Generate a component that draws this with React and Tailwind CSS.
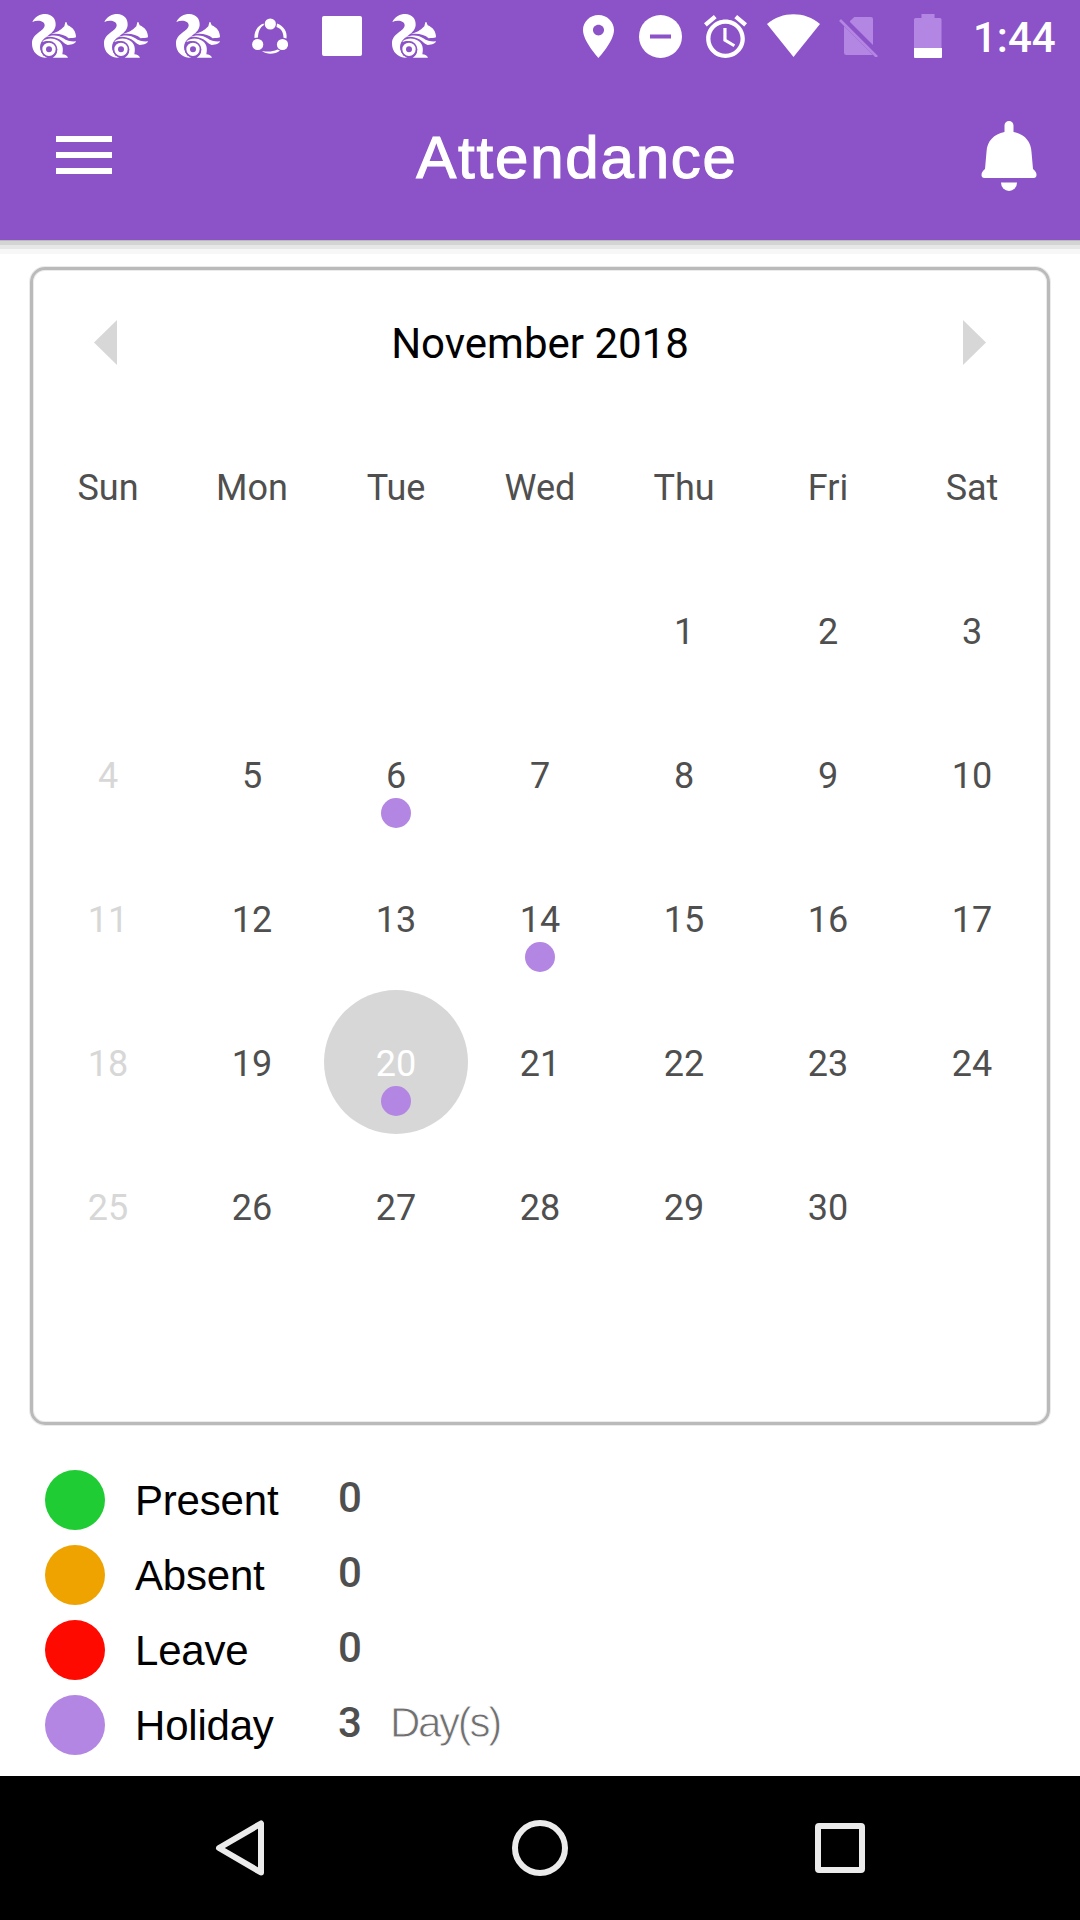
import React from 'react';

const weekdays = ['Sun', 'Mon', 'Tue', 'Wed', 'Thu', 'Fri', 'Sat'];

// November 2018 starts on a Thursday; six rows are always shown
const FIRST_WEEKDAY = 4;
const DAYS_IN_MONTH = 30;
const SELECTED_DAY = 20;
const holidays = [6, 14, 20];

const cells = Array.from({ length: 42 }, (_, i) => {
  const day = i - FIRST_WEEKDAY + 1;
  return day >= 1 && day <= DAYS_IN_MONTH ? day : null;
});

const legend = [
  { label: 'Present', count: 0, color: 'bg-[#20cc33]' },
  { label: 'Absent', count: 0, color: 'bg-[#efa300]' },
  { label: 'Leave', count: 0, color: 'bg-[#ff0a00]' },
  { label: 'Holiday', count: 3, color: 'bg-[#b386e3]', unit: 'Day(s)' },
];

const SquirrelIcon = () => (
  <svg className="h-11 w-11 shrink-0" viewBox="0 0 132 132" fill="white">
    <path d="M1 24C9 8 24 0 40 0C60 1 72 14 71 33C70 50 56 59 44 68C28 78 22 92 25 106C27 118 34 125 46 130C42 132 36 132 30 130C10 123 0 108 0 88C0 58 38 52 38 34C38 21 18 17 1 24Z" />
    <path d="M56 60C72 56 86 50 97 37L100 25L103 24L107 34C122 40 132 52 132 70C125 73 118 72 110 73C98 61 78 57 56 60Z" />
    <path d="M40 70C60 61 82 63 94 73C104 81 120 83 132 82C130 89 122 92 107 93C98 91 94 83 82 76C68 68 54 66 40 70Z" />
    <path d="M32 82C50 66 84 74 91 96C94 106 92 114 91 121C99 121 106 125 108 131H62C74 125 78 112 74 102C69 86 50 76 32 84Z" />
    <circle cx="51" cy="106" r="25" fill="#8c52c7" />
    <circle cx="51" cy="106" r="14.500" fill="none" stroke="white" strokeWidth="11" />
  </svg>
);

const ShareIcon = () => (
  <svg className="h-9 w-9 shrink-0" viewBox="0 0 36 36" fill="white">
    <circle cx="18.300" cy="6" r="5.600" />
    <circle cx="5.700" cy="26.500" r="5.600" />
    <circle cx="30.500" cy="26.500" r="5.600" />
    <path d="M11.500 5.500C5 8 2 14 2.500 20L6 19.500C6 14 8 9 12 7Z" />
    <path d="M25 5.500C32 8 35.500 14 34.500 20.500L31.500 19.800C31.500 14 29 10.500 24.500 9Z" />
    <path d="M10 33C15 37 23 36.500 28 32.500L25.500 31.500C20 34 16 33.800 10 33Z" />
  </svg>
);

const StatusBar = () => (
  <div className="flex h-[72px] items-start">
    <div className="flex w-[436px] shrink-0 items-center gap-7 pt-3.5 pl-8">
      <SquirrelIcon />
      <SquirrelIcon />
      <SquirrelIcon />
      <div className="flex w-11 shrink-0 justify-center">
        <ShareIcon />
      </div>
      <div className="mx-0.5 h-10 w-10 shrink-0 rounded-xs bg-white" />
      <SquirrelIcon />
    </div>
    <div className="ml-[147px] flex shrink-0 items-start pt-3.5">
      <svg className="mt-px h-[43px] w-[31px]" viewBox="5 2 14 20" preserveAspectRatio="none" fill="white">
        <path d="M12 2C8.130 2 5 5.130 5 9c0 5.250 7 13 7 13s7-7.750 7-13c0-3.870-3.130-7-7-7zm0 9.500c-1.380 0-2.500-1.120-2.500-2.500s1.120-2.500 2.500-2.500 2.500 1.120 2.500 2.500-1.120 2.500-2.500 2.500z" />
      </svg>
      <svg className="mt-px ml-[25px] h-[43px] w-[43px]" viewBox="0 0 43 43">
        <circle cx="21.500" cy="21.500" r="21.500" fill="white" />
        <rect x="11" y="19.500" width="21" height="4" fill="#8c52c7" />
      </svg>
      <svg className="mt-px ml-[22px] h-[43px] w-[43px]" viewBox="2 1.860 20 20.140" preserveAspectRatio="none" fill="white">
        <path d="M22 5.720l-4.600-3.860-1.290 1.530 4.600 3.860L22 5.720zM7.880 3.390L6.600 1.860 2 5.710l1.290 1.530 4.590-3.850zM12.500 8H11v6l4.750 2.850.75-1.230-4-2.370V8zM12 4c-4.970 0-9 4.030-9 9s4.020 9 9 9c4.970 0 9-4.030 9-9s-4.030-9-9-9zm0 16c-3.870 0-7-3.130-7-7s3.130-7 7-7 7 3.130 7 7-3.130 7-7 7z" />
      </svg>
      <svg className="ml-5 h-[43px] w-[53px]" viewBox="0 0 53 43" fill="white">
        <path d="M0 10C15 -3 38 -3 53 10L26.500 43Z" />
      </svg>
      <svg className="mt-[3px] ml-[19px] h-10 w-[39px]" viewBox="0 0 117 120" fill="#b386e3">
        <path d="M33 12L46 0H96Q102 0 102 6V84L33 15Z" />
        <path d="M15 27L102 114H22Q15 114 15 107Z" />
        <path d="M3 9L114 120" stroke="#b386e3" strokeWidth="8" />
      </svg>
      <svg className="ml-9 h-11 w-7" viewBox="0 0 28 44">
        <path d="M7.500 0H20.500V4H26Q27.500 4 27.500 5.500V34H0V5.500Q0 4 1.500 4H7.500Z" fill="#b386e3" />
        <path d="M0 34H28V43Q28 44 27 44H1Q0 44 0 43Z" fill="white" />
      </svg>
      <span className="ml-[31px] pt-px text-[42px] leading-[46px] font-medium whitespace-nowrap text-white">1:44</span>
    </div>
  </div>
);

const Header = () => (
  <header className="h-60 bg-[#8c52c7]">
    <StatusBar />
    <div className="flex h-[168px] items-start justify-between pr-[43px] pl-14">
      <div className="mt-16 flex w-14 flex-col gap-2.5">
        <div className="h-1.5 bg-white" />
        <div className="h-1.5 bg-white" />
        <div className="h-1.5 bg-white" />
      </div>
      <h1 className="mt-[51px] ml-[61px] font-['Liberation_Sans',sans-serif] text-[60px] leading-[70px] tracking-[1.8px] text-white [-webkit-text-stroke:1.2px_white]">
        Attendance
      </h1>
      <svg className="mt-[49px] h-[70px] w-14" viewBox="0 0 56 70" fill="white">
        <path d="M23.500 11V4.500A4.500 4.500 0 0 1 32.500 4.500V11C43 13 50 20 50.500 31L52 48C54 50 55.500 51 55.500 54Q55.500 57 52.500 57H3.500Q.5 57 .5 54C.5 51 2 50 4 48L5.500 31C6 20 13 13 23.500 11Z" />
        <path d="M20 61.500H36A8 8.500 0 0 1 20 61.500Z" />
      </svg>
    </div>
  </header>
);

const DayCell = ({ day, isSunday }) => {
  const selected = day === SELECTED_DAY;
  let color = 'text-[#4f4f4f]';
  if (isSunday) color = 'text-[#d7d7d7]';
  if (selected) color = 'bg-[#d7d7d7] text-white';

  return (
    <div className={`relative flex h-36 items-center justify-center rounded-full pt-1 ${color}`}>
      {day}
      {holidays.includes(day) && (
        <span className="absolute top-24 left-[57px] h-[30px] w-[30px] rounded-full bg-[#b386e3]" />
      )}
    </div>
  );
};

const Calendar = () => (
  <section className="mx-[30px] mt-[13px] h-[1158px] rounded-[15px] border-3 border-[#bababa] px-[3px] shadow-[0_0_0_1px_#ebebeb,inset_0_0_0_1px_#ebebeb]">
    <div className="flex h-36 items-center justify-between px-[58px]">
      <svg className="h-[45px] w-[23px]" viewBox="0 0 23 45" fill="#d7d7d7">
        <path d="M23 0V45L0 22.500Z" />
      </svg>
      <h2 className="pt-0.5 text-[42px] text-black">November 2018</h2>
      <svg className="h-[45px] w-[23px]" viewBox="0 0 23 45" fill="#d7d7d7">
        <path d="M0 0V45L23 22.500Z" />
      </svg>
    </div>
    <div className="grid grid-cols-7 text-4xl">
      {weekdays.map((name) => (
        <div key={name} className="flex h-36 items-center justify-center pt-1 text-[#4f4f4f]">
          {name}
        </div>
      ))}
      {cells.map((day, index) => (
        <DayCell key={index} day={day} isSunday={index % 7 === 0} />
      ))}
    </div>
  </section>
);

const Legend = () => (
  <section className="mt-[45px] flex flex-col gap-[15px] pl-[45px]">
    {legend.map((item) => (
      <div key={item.label} className="flex h-[60px] items-center">
        <span className={`h-[60px] w-[60px] rounded-full ${item.color}`} />
        <span className="ml-[30px] w-[203px] pt-0.5 font-['Liberation_Sans',sans-serif] text-[42px] leading-none tracking-[-0.2px] text-black">
          {item.label}
        </span>
        <span className="w-[52px] pb-1 text-[42px] leading-[56px] font-medium text-[#4f4f4f]">{item.count}</span>
        {item.unit && (
          <span className="pb-1 font-['Liberation_Sans',sans-serif] text-[42px] leading-[56px] tracking-[-2.3px] text-[#707070] [-webkit-text-stroke:0.8px_white]">
            {item.unit}
          </span>
        )}
      </div>
    ))}
  </section>
);

const NavigationBar = () => (
  <nav className="mt-[21px] flex h-36 items-center justify-between bg-black px-[215px]">
    <svg className="h-14 w-[50px]" viewBox="0 0 50 56" fill="none" stroke="#ebebeb" strokeWidth="6" strokeLinejoin="round">
      <path d="M46 3.500V52.500L4 28Z" />
    </svg>
    <svg className="h-14 w-14" viewBox="0 0 56 56" fill="none" stroke="#ebebeb" strokeWidth="6">
      <circle cx="28" cy="28" r="25" />
    </svg>
    <div className="h-[50px] w-[50px] rounded-sm border-6 border-[#ebebeb]" />
  </nav>
);

const App = () => (
  <div className="h-[1920px] w-[1080px] overflow-hidden bg-white font-['Roboto',sans-serif]">
    <Header />
    <div className="h-3.5">
      <div className="h-px bg-[#bababa]" />
      <div className="h-1 bg-[#d4d4d4]" />
      <div className="h-1 bg-[#e7e7e7]" />
      <div className="h-[5px] bg-[#f7f7f7]" />
    </div>
    <Calendar />
    <Legend />
    <NavigationBar />
  </div>
);

export default App;
